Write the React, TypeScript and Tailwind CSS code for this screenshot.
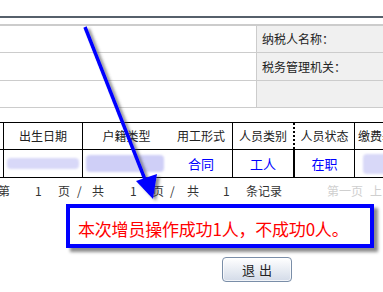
import React from "react";

const font = { fontFamily: '"Noto Sans CJK SC", "Noto Sans", sans-serif' };

function InfoRow({ label, h }: { label: string; h: string }) {
  return (
    <div className={`flex ${h} border-b border-[#cccccc]`}>
      <div className="w-[256px] bg-white" />
      <div className="flex-1 border-l border-[#cccccc] bg-[#f0f0f0] flex items-center pl-[5px] text-[12px] text-[#222]">
        {label}
      </div>
    </div>
  );
}

export default function App() {
  return (
    <div
      className="relative w-[383px] h-[292px] overflow-hidden bg-white text-[#222]"
      style={font}
    >
      <div className="h-[16px]" />
      <div className="h-[2px] bg-[#56606b]" />
      <div className="h-[6px]" />
      <div className="h-[2px] bg-[#cccccc]" />
      <InfoRow label="纳税人名称：" h="h-[27px]" />
      <InfoRow label="税务管理机关：" h="h-[28px]" />
      <InfoRow label="" h="h-[27px]" />

      <div className="h-[14px]" />

      {/* table */}
      <div className="border-t border-b border-black w-[420px]">
        <div className="flex h-[27px] border-b border-black text-[12px] items-stretch">
          <div className="w-[3px]" />
          <div className="w-[79px] border-l border-black flex items-center justify-center">出生日期</div>
          <div className="w-[88px] border-l border-black flex items-center justify-center">户籍类型</div>
          <div className="w-[62px] flex items-center justify-center">用工形式</div>
          <div className="w-[61px] border-l border-black flex items-center justify-center">人员类别</div>
          <div className="w-[61px] border-l-2 border-dotted border-black flex items-center justify-center">人员状态</div>
          <div className="w-[66px] border-l border-black flex items-center pl-[3px] whitespace-nowrap">缴费基数</div>
        </div>
        <div className="flex h-[27px] text-[13px] items-stretch">
          <div className="w-[3px]" />
          <div className="w-[79px] border-l border-black flex items-center justify-center">
            <div className="w-[72px] h-[11px] bg-[#d8d8f8] blur-[1px] rounded-sm" />
          </div>
          <div className="w-[88px] border-l border-black flex items-center pl-[3px]">
            <div className="w-[78px] h-[17px] bg-[#cfcff7] blur-[1px] rounded-sm" />
          </div>
          <div className="w-[62px] flex items-center justify-center text-[#0000ff]">合同</div>
          <div className="w-[61px] border-l border-black flex items-center justify-center text-[#0000ff]">工人</div>
          <div className="w-[61px] border-l-2 border-black flex items-center justify-center text-[#0000ff]">在职</div>
          <div className="w-[66px] border-l border-black flex items-center pl-[8px]">
            <div className="w-[40px] h-[20px] bg-[#d8d8f8] blur-[1px] rounded-sm" />
          </div>
        </div>
      </div>

      {/* pagination */}
      <div className="flex h-[26px] items-center text-[12px] text-[#333] whitespace-nowrap">
        <span className="ml-[-2px] w-[37px]">第</span>
        <span className="w-[23px]">1</span>
        <span className="w-[19px]">页</span>
        <span className="w-[15px]">/</span>
        <span className="w-[38px]">共</span>
        <span className="w-[22px]">1</span>
        <span className="w-[18px]">页</span>
        <span className="w-[17px]">/</span>
        <span className="w-[36px]">共</span>
        <span className="w-[23px]">1</span>
        <span className="w-[81px]">条记录</span>
        <span className="w-[43px] text-[#cfcfcf]">第一页</span>
        <span className="text-[#cfcfcf]">上</span>
      </div>

      {/* message box */}
      <div className="ml-[66px] w-[308px] h-[44px] border-[4px] border-[#0000ff] bg-white shadow-[4px_4px_3px_rgba(0,0,0,0.45)] flex items-center pl-[8px] pt-[4px]">
        <span className="text-[17px] leading-none text-[#ff0000] whitespace-nowrap tracking-[-0.2px]">
          本次增员操作成功1人，不成功0人。
        </span>
      </div>

      {/* exit button */}
      <div className="mt-[8px] ml-[222px]">
        <button className="w-[70px] h-[25px] rounded-[4px] border border-[#7a8ea8] bg-gradient-to-b from-white to-[#d3dbe8] text-[13px] text-[#222] tracking-[4px] pl-[4px] shadow-[inset_0_0_0_1px_rgba(255,255,255,0.7)]">
          退出
        </button>
      </div>

      {/* arrow overlay */}
      <svg
        className="absolute left-0 top-0 pointer-events-none"
        width="383"
        height="292"
        viewBox="0 0 383 292"
      >
        <defs>
          <filter id="sh" x="-50%" y="-50%" width="200%" height="200%">
            <feDropShadow dx="3" dy="2" stdDeviation="1.5" floodColor="#444" floodOpacity="0.6" />
          </filter>
        </defs>
        <g filter="url(#sh)">
          <line x1="85" y1="27" x2="146" y2="182" stroke="#0000ff" strokeWidth="3.5" />
          <polygon points="153,199 136,181 157,174" fill="#0000ff" />
        </g>
      </svg>
    </div>
  );
}
